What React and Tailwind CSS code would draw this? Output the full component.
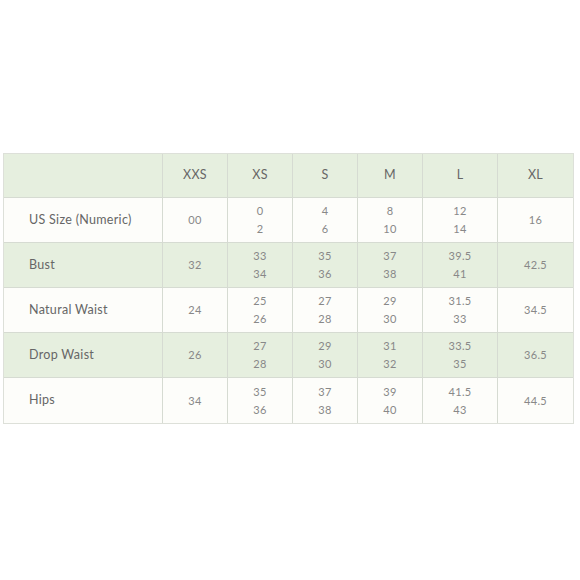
const sizes = ["XXS", "XS", "S", "M", "L", "XL"];

const rows = [
	{label: "US Size (Numeric)", values: [["00"], ["0", "2"], ["4", "6"], ["8", "10"], ["12", "14"], ["16"]]},
	{label: "Bust", values: [["32"], ["33", "34"], ["35", "36"], ["37", "38"], ["39.5", "41"], ["42.5"]]},
	{label: "Natural Waist", values: [["24"], ["25", "26"], ["27", "28"], ["29", "30"], ["31.5", "33"], ["34.5"]]},
	{label: "Drop Waist", values: [["26"], ["27", "28"], ["29", "30"], ["31", "32"], ["33.5", "35"], ["36.5"]]},
	{label: "Hips", values: [["34"], ["35", "36"], ["37", "38"], ["39", "40"], ["41.5", "43"], ["44.5"]]},
];

const cols = "grid-cols-[158px_65px_65px_65px_65px_75px_76px]";

export default function App() {
	return (
		<div
			className="w-[580px] h-[580px] bg-white pt-[153px] pl-[3px]"
			style={{fontFamily: "Lato, 'Open Sans', sans-serif"}}
		>
			<div className="w-[571px] border border-[#dde0d9]">
				{/* Header */}
				<div className={`grid ${cols} h-[44px] bg-[#e6efdf] border-b border-[#d6dbd2]`}>
					<div />
					{sizes.map((s) => (
						<div
							key={s}
							className="flex items-center justify-center border-l border-[#d6dbd2] text-[12.5px] text-[#666] tracking-[0.3px]"
						>
							{s}
						</div>
					))}
				</div>

				{rows.map((row, i) => (
					<div
						key={row.label}
						className={`grid ${cols} h-[45px] ${i % 2 === 1 ? "bg-[#e6efdf]" : "bg-[#fdfdfa]"} ${i < rows.length - 1 ? "border-b border-[#d6dbd2]" : ""}`}
					>
						<div className="flex items-center pl-[25px] text-[12.5px] text-[#666] tracking-[0.3px]">
							{row.label}
						</div>
						{row.values.map((v, j) => (
							<div
								key={j}
								className="flex flex-col items-center justify-center border-l border-[#d6dbd2] text-[11px] text-[#888] leading-[18px] tracking-[0.3px]"
							>
								{v.map((n) => (
									<span key={n}>{n}</span>
								))}
							</div>
						))}
					</div>
				))}
			</div>
		</div>
	);
}
